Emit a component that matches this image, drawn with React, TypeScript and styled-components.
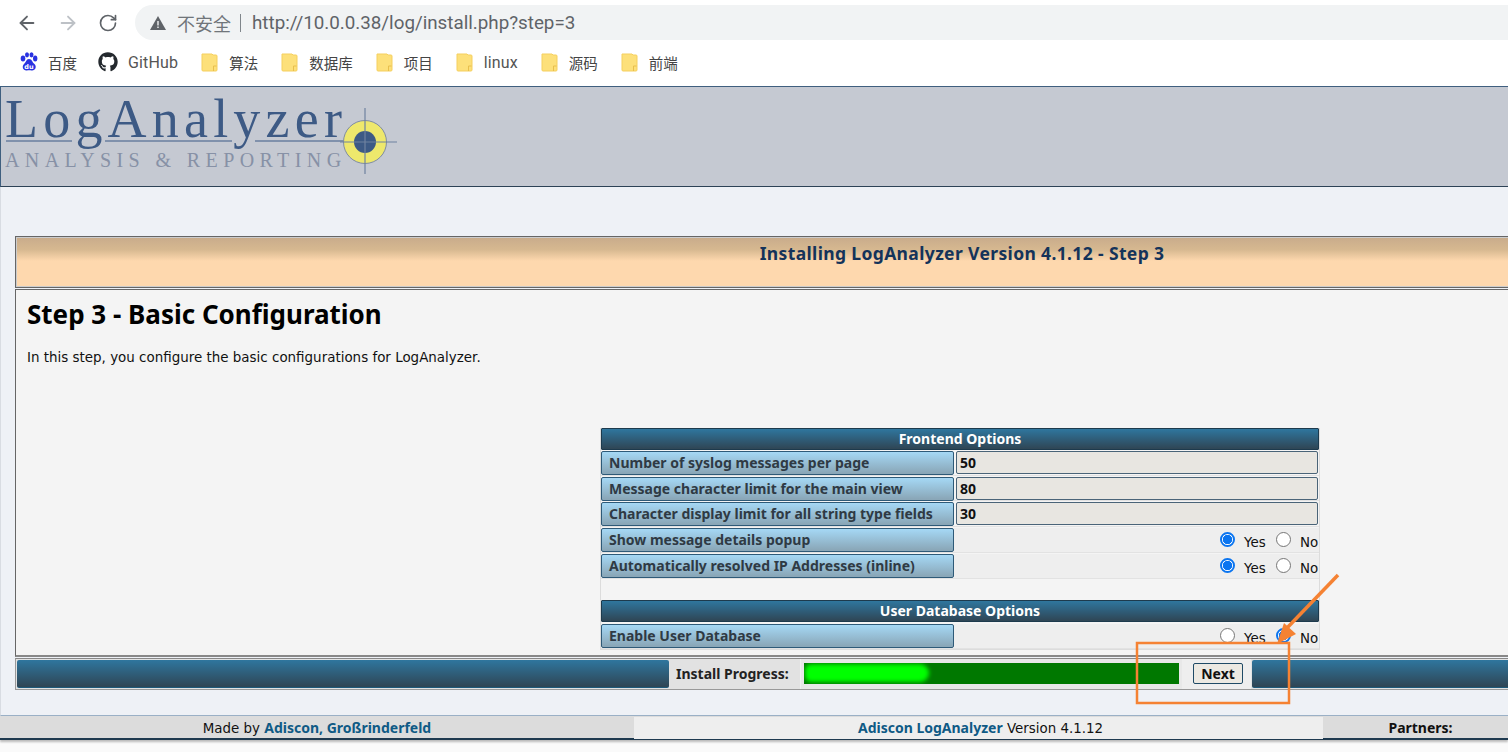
import React from "react";
import styled, { createGlobalStyle } from "styled-components";
import { ArrowLeft, ArrowRight, RotateCw } from "lucide-react";
import { FaGithub } from "react-icons/fa";

const BOLD = `"Noto Sans", "DejaVu Sans", sans-serif`;

const Global = createGlobalStyle`
  html, body { margin: 0; padding: 0; height: 752px; overflow: hidden; background: #fafafa; }
  * { box-sizing: border-box; }
  body { font-family: "DejaVu Sans", "Noto Sans CJK SC", sans-serif; font-size: 13.4px; color: #000; }
`;

const Page = styled.div`width: 1508px; height: 752px; overflow: hidden; position: relative;`;

const Browser = styled.div`height: 86px; background: #fff; padding-top: 5px;`;
const NavRow = styled.div`display: flex; align-items: center; height: 35px;`;
const NavButtons = styled.div`display: flex; gap: 19px; width: 135px; padding-left: 16px; align-items: center;`;
const Address = styled.div`
  flex: 1; height: 35px; border-radius: 18px 0 0 18px; background: #f1f3f4;
  display: flex; align-items: center; padding-left: 15px;
  font-size: 18px; color: #5f6368;
`;
const Insecure = styled.span`margin-left: 11px; color: #70757a; font-size: 18px; font-family: "Noto Sans CJK SC", sans-serif;`;
const Divider = styled.span`width: 1px; height: 18px; background: #80868b; margin: 0 11px 0 9px;`;
const Url = styled.span`color: #5f6368; font-family: "Roboto", sans-serif; font-size: 18.8px;`;
const Bookmarks = styled.div`display: flex; align-items: center; gap: 23px; height: 36px; padding: 8px 0 0 20px;`;
const Mark = styled.div<{ $gap?: number; $pull?: number }>`
  display: flex; align-items: center; gap: ${(p) => p.$gap ?? 11}px; margin-left: ${(p) => p.$pull ?? 0}px;
  font-family: "Noto Sans CJK SC", sans-serif; font-size: 14.5px; color: #444;
`;
const MarkLatin = styled.span`font-family: "Roboto", sans-serif; font-size: 16px; letter-spacing: 0.15px; color: #555;`;

const Header = styled.div`
  height: 101px; background: #c5c9d2; border: 1px solid #3f5f7f; border-right: 0;
  border-bottom-color: #2d4256; padding: 0 0 0 4px;
`;

const Main = styled.div`
  height: 529px; background: #eef1f6; padding: 49px 0 0 14px; border-left: 1px solid #d8dce2;
  border-bottom: 1px solid #9ab0c6;
`;
const Wide = styled.div`width: 1894px;`;
const TitleBar = styled.div`
  height: 52px; border: 1px solid #666; outline: 1px solid #ccc; outline-offset: -2px;
  background: linear-gradient(#c8ab8b 0, #d6b890 25%, #fed8ae 48%, #fed8ae 100%);
  text-align: center; padding-top: 4px; color: #14335a;
`;
const TitleText = styled.span`font-family: ${BOLD}; font-weight: 700; font-size: 17.5px; letter-spacing: 0.36px;`;
const Panel = styled.div`
  height: 368px; margin-top: 1px; background: #f4f4f4; border: 1px solid #666; border-bottom: 2px solid #888;
  padding: 8px 0 0 11px;
`;
const Heading = styled.h1`margin: 0; font-family: ${BOLD}; font-size: 26px; line-height: 32px; font-weight: 700; color: #000;`;
const Intro = styled.p`margin: 19px 0 0; font-size: 13.45px; line-height: 18px; color: #111;`;

const Table = styled.div`
  width: 720px; margin: 61px 0 0 573px; border: 1px solid #dcdcdc; border-top: 0; display: flex; flex-direction: column;
  background: #f4f4f4;
`;
const Band = styled.div<{ $after?: number }>`
  height: 22px; border-radius: 1px; flex: none; margin-bottom: ${(p) => p.$after ?? 0}px;
  background: linear-gradient(#2f769e, #2f4554); border: 1px solid #1d3a4d;
  color: #fff; font-family: ${BOLD}; font-weight: 700; font-size: 14px; line-height: 20px; text-align: center;
`;
const Row = styled.div<{ $h?: number }>`
  display: grid; grid-template-columns: 353px 1fr; height: ${(p) => p.$h ?? 26}px; flex: none;
  border-bottom: 1px solid #e2e2e2; padding-top: 1px;
`;
const Label = styled.div`
  height: 24px; border: 1px solid #2e5a78; border-radius: 2px; background: linear-gradient(#a5d8f5, #8aa7b8 95%);
  font-family: ${BOLD}; font-weight: 700; font-size: 14px; line-height: 22px; padding-left: 7px; color: #2f3a44; white-space: nowrap;
`;
const Field = styled.div`padding: 0 1px 0 2px;`;
const InputBox = styled.div`
  height: 23px; background: #e8e6e1; border: 1px solid #4a6478; border-radius: 2px;
  font-family: ${BOLD}; font-weight: 700; font-size: 14px; line-height: 21px; padding-left: 3px; color: #111;
`;
const Radios = styled.div`
  height: 24px; background: #eee; margin-left: -2px; margin-right: -1px; padding-right: 2px;
  display: flex; justify-content: flex-end; align-items: flex-start;
  font-size: 13.4px; color: #111;
`;
const RadioMark = styled.span<{ $on?: boolean }>`
  width: 15px; height: 15px; border-radius: 50%; margin-top: 4px; flex: none;
  border: ${(p) => (p.$on ? "2px solid #0b75f0" : "1px solid #767676")};
  background: ${(p) => (p.$on ? "radial-gradient(circle, #0b75f0 0 4.4px, #fff 5px)" : "#fff")};
`;
const RadioText = styled.span<{ $w: number }>`width: ${(p) => p.$w}px; padding-left: 9px; line-height: 24px; margin-top: 3px; white-space: nowrap;`;
const Blank = styled.div`height: 21px; flex: none;`;

const ProgressRow = styled.div`
  height: 32px; margin-top: 1px; display: flex; border: 1px solid #999; border-top: 1px solid #888; background: #e2e2e2;
`;
const DarkFill = styled.div<{ $w: number }>`
  width: ${(p) => p.$w}px; flex: none; margin: 1px 0 0 1px; border-radius: 2px;
  height: 28px; background: linear-gradient(#2f769e, #2f4554); border-bottom: 1px solid #1e5a7a;
`;
const ProgressLabel = styled.div`width: 131px; flex: none; font-family: ${BOLD}; font-weight: 700; font-size: 14px; line-height: 30px; padding-left: 7px; color: #222;`;
const ProgressCell = styled.div`width: 382px; flex: none; padding: 4px 3px 0; background: #e8e8e8; border-left: 1px solid #f0f0f0;`;
const Track = styled.div`height: 21px; background: #007800; overflow: hidden;`;
const Glow = styled.div`width: 124px; height: 18px; margin: 1px 0 0 1px; border-radius: 7px 10px 10px 7px; background: #00ff00; filter: blur(2px);`;
const NextCell = styled.div`width: 69px; flex: none; padding: 4px 0 0 11px; background: #eee;`;
const NextButton = styled.div`
  width: 50px; height: 21px; background: #ece9e2; border: 1px solid #1f4a66; border-radius: 2px;
  text-align: center; font-family: ${BOLD}; font-weight: 700; font-size: 14px; line-height: 19px; color: #111;
`;

const Footer = styled.div`
  height: 24px; display: grid; grid-template-columns: 634px 689px 1fr; background: #dcdcdc;
  border-top: 1px solid #dcdcdc; border-bottom: 2px solid #1f3a50; font-size: 13.4px; box-shadow: 0 2px 2px #bbb;
`;
const FootCell = styled.div<{ $light?: boolean; $shift?: number }>`
  text-align: center; line-height: 21px; padding-left: ${(p) => p.$shift ?? 0}px;
  background: ${(p) => (p.$light ? "#eee" : "transparent")}; color: #111; white-space: nowrap;
`;
const FootLink = styled.span`color: #0f5a85; font-family: ${BOLD}; font-weight: 700; font-size: 14px;`;
const FootStrong = styled.span`font-family: ${BOLD}; font-weight: 700; font-size: 14px;`;

const Overlay = styled.svg`position: absolute; left: 0; top: 0; pointer-events: none;`;

const Folder = () => (
  <svg width="17" height="20" viewBox="0 0 17 20">
    <path d="M1 2h10l1 1h3a1 1 0 0 1 1 1v14a1 1 0 0 1-1 1H2a1 1 0 0 1-1-1z" fill="#fde07a" stroke="#f5cf5e" />
    <path d="M12.5 19v-5h3" fill="none" stroke="#e8bf4c" />
  </svg>
);

const Baidu = () => (
  <svg width="18" height="20" viewBox="0 0 18 20" fill="#2932e1">
    <ellipse cx="3" cy="6.5" rx="2.3" ry="2.9" />
    <ellipse cx="7" cy="2.8" rx="2" ry="2.6" />
    <ellipse cx="11.5" cy="2.8" rx="2" ry="2.6" />
    <ellipse cx="15.2" cy="6.5" rx="2.2" ry="2.9" />
    <path d="M9 7c3 0 3 3 5.500 5 2.500 2.500 1 7-3 6.500-1.500-.3-3-.5-4.500 0C3 19 1.500 14.500 4 12c2.200-1.500 2-5 5-5z" />
    <text x="9" y="16.500" fontSize="6.500" fill="#fff" textAnchor="middle" fontFamily="DejaVu Sans" fontWeight="bold">du</text>
  </svg>
);

const Logo = () => (
  <svg width="396" height="99" viewBox="0 0 396 99">
    <text x="0" y="50" fontFamily="Liberation Serif" fontSize="54" letterSpacing="5.2" fill="#3d5a85">LogAnalyzer</text>
    <text x="0" y="80" fontFamily="Liberation Serif" fontSize="20" letterSpacing="5.4" fill="#8791a6">ANALYSIS &amp; REPORTING</text>
    <path d="M1 54H67M100 54H227M250 54H340" stroke="#3d5a85" strokeWidth="1.200" fill="none" />
    <circle cx="360" cy="55" r="21.500" fill="#eee86c" stroke="#7f8ca3" strokeWidth="1" />
    <circle cx="360" cy="55" r="11" fill="#3d5a85" />
    <path d="M360 21V87M335 55H392" stroke="#6f82a0" strokeWidth="1.200" />
  </svg>
);

const rows = [
  { label: "Number of syslog messages per page", value: "50", h: 26 },
  { label: "Message character limit for the main view", value: "80", h: 25 },
  { label: "Character display limit for all string type fields", value: "30", h: 26 },
];

const RadioPair = ({ yes }: { yes: boolean }) => (
  <Radios>
    <RadioMark $on={yes} />
    <RadioText $w={41}>Yes</RadioText>
    <RadioMark $on={!yes} />
    <RadioText $w={26}>No</RadioText>
  </Radios>
);

export default function App() {
  return (
    <Page>
      <Global />
      <Browser>
        <NavRow>
          <NavButtons>
            <ArrowLeft size={22} color="#5f6368" />
            <ArrowRight size={22} color="#bdc1c6" />
            <RotateCw size={20} color="#5f6368" />
          </NavButtons>
          <Address>
            <svg width="16" height="14" viewBox="0 0 16 14"><path d="M8 0l8 14H0z" fill="#5f6368" /><path d="M7.300 5h1.400v4.500H7.300zM7.300 10.500h1.400v1.500H7.300z" fill="#f1f3f4" /></svg>
            <Insecure>不安全</Insecure>
            <Divider />
            <Url>http://10.0.0.38/log/install.php?step=3</Url>
          </Address>
        </NavRow>
        <Bookmarks>
          <Mark $gap={10}><Baidu />百度</Mark>
          <Mark $gap={10} $pull={-2}><FaGithub size={20} color="#24292e" /><MarkLatin>GitHub</MarkLatin></Mark>
          <Mark><Folder />算法</Mark>
          <Mark><Folder />数据库</Mark>
          <Mark><Folder />项目</Mark>
          <Mark><Folder /><MarkLatin>linux</MarkLatin></Mark>
          <Mark><Folder />源码</Mark>
          <Mark><Folder />前端</Mark>
        </Bookmarks>
      </Browser>
      <Header><Logo /></Header>
      <Main>
        <Wide>
          <TitleBar><TitleText>Installing LogAnalyzer Version 4.1.12 - Step 3</TitleText></TitleBar>
          <Panel>
            <Heading>Step 3 - Basic Configuration</Heading>
            <Intro>In this step, you configure the basic configurations for LogAnalyzer.</Intro>
            <Table>
              <Band>Frontend Options</Band>
              {rows.map((r) => (
                <Row key={r.label} $h={r.h}>
                  <Label>{r.label}</Label>
                  <Field><InputBox>{r.value}</InputBox></Field>
                </Row>
              ))}
              <Row><Label>Show message details popup</Label><Field><RadioPair yes /></Field></Row>
              <Row><Label>Automatically resolved IP Addresses (inline)</Label><Field><RadioPair yes /></Field></Row>
              <Blank />
              <Band $after={1}>User Database Options</Band>
              <Row><Label>Enable User Database</Label><Field><RadioPair yes={false} /></Field></Row>
            </Table>
          </Panel>
          <ProgressRow>
            <DarkFill $w={652} />
            <ProgressLabel>Install Progress:</ProgressLabel>
            <ProgressCell><Track><Glow /></Track></ProgressCell>
            <NextCell><NextButton>Next</NextButton></NextCell>
            <DarkFill $w={640} />
          </ProgressRow>
        </Wide>
      </Main>
      <Footer>
        <FootCell>Made by <FootLink>Adiscon, Großrinderfeld</FootLink></FootCell>
        <FootCell $light $shift={4}><FootLink>Adiscon LogAnalyzer</FootLink> Version 4.1.12</FootCell>
        <FootCell $shift={10}><FootStrong>Partners:</FootStrong></FootCell>
      </Footer>
      <Overlay width="1508" height="752" viewBox="0 0 1508 752">
        <rect x="1137" y="643" width="152" height="60" fill="none" stroke="#f58233" strokeWidth="2.5" />
        <path d="M1338 575L1287 628" stroke="#f58233" strokeWidth="3.5" fill="none" />
        <path d="M1277 644L1284 623L1296 634z" fill="#f58233" />
      </Overlay>
    </Page>
  );
}
